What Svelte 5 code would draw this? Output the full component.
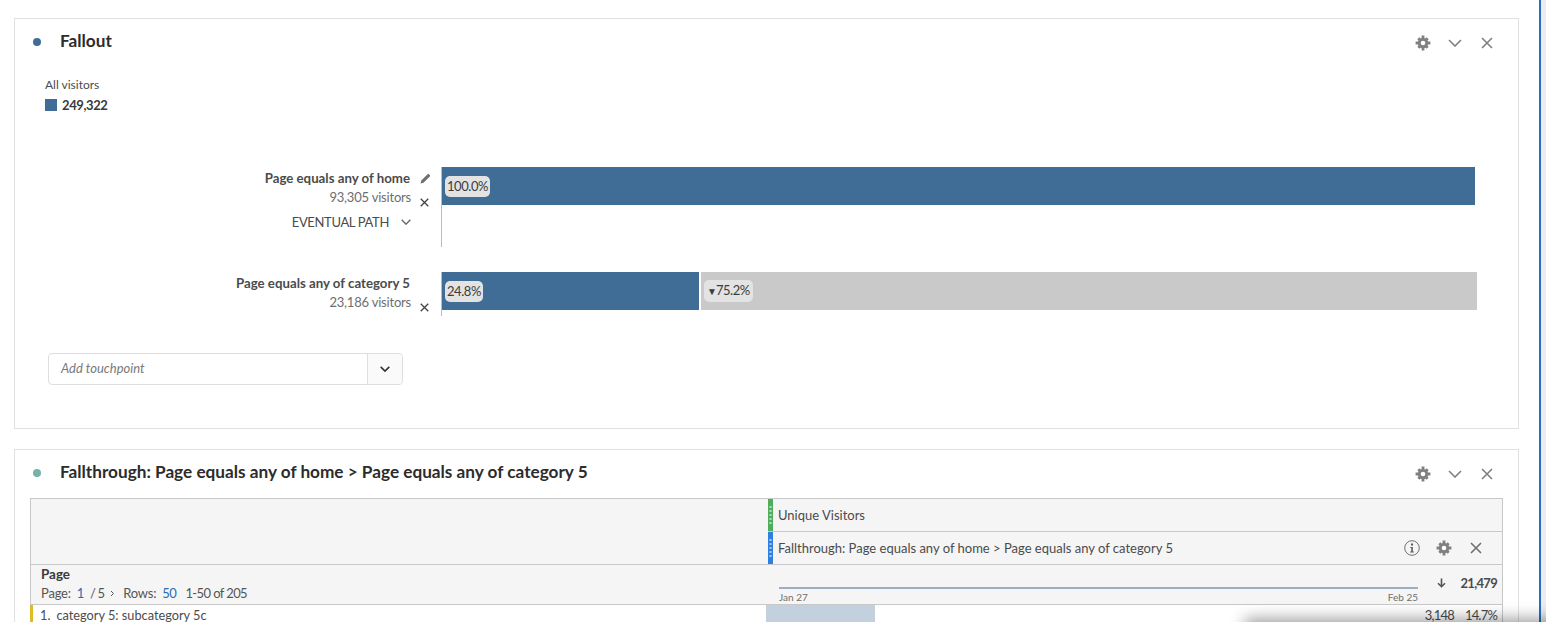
<script>
  const steps = [
    { title: 'Page equals any of home', sub: '93,305 visitors', pct: '100.0%', path: true },
    { title: 'Page equals any of category 5', sub: '23,186 visitors', pct: '24.8%', drop: '75.2%' }
  ];
</script>

{#snippet gear(s)}
  <svg class="ic" width={s} height={s} viewBox="0 0 16 16" aria-hidden="true">
    <circle cx="8" cy="8" r="5.2" fill="#808080" />
    <path d="M6.6 0.6h2.8v3h-2.8zM6.6 12.4h2.8v3h-2.8zM0.6 6.6h3v2.8h-3zM12.4 6.6h3v2.8h-3z" fill="#808080" />
    <path d="M2.3 4.3l2-2 2 2-2 2zM9.7 4.3l2-2 2 2-2 2zM2.3 11.7l2-2 2 2-2 2zM9.7 11.7l2-2 2 2-2 2z" fill="#808080" />
    <circle cx="8" cy="8" r="2.3" fill="#fff" />
  </svg>
{/snippet}
{#snippet cross(s, c = '#808080', w = 1.6)}
  <svg class="ic" width={s} height={s} viewBox="0 0 12 12" aria-hidden="true">
    <path d="M1 1l10 10M11 1L1 11" stroke={c} stroke-width={w} fill="none" />
  </svg>
{/snippet}
{#snippet chev(w, h, c = '#808080', sw = 1.6)}
  <svg class="ic" width={w} height={h} viewBox="0 0 14 8" aria-hidden="true">
    <path d="M1 1l6 6 6-6" stroke={c} stroke-width={sw} fill="none" />
  </svg>
{/snippet}
{#snippet tools()}
  <div class="tools">
    {@render gear(16)}
    <span class="tchev">{@render chev(14, 8)}</span>
    {@render cross(12)}
  </div>
{/snippet}

<div class="page">
  <main class="main">
    <section class="panel fallout">
      <header class="phead">
        <span class="dot blue"></span>
        <h2>Fallout</h2>
        {@render tools()}
      </header>
      <div class="legend">
        <div class="lname">All visitors</div>
        <div class="lval"><span class="swatch"></span><b>249,322</b></div>
      </div>
      <div class="steps">
        {#each steps as s, i}
          <div class="step" class:first={i === 0}>
            <div class="info">
              <div class="line title">
                <span>{s.title}</span>
                <span class="slot">
                  {#if s.path}
                    <svg class="ic" width="11" height="11" viewBox="0 0 11 11" aria-hidden="true">
                      <path d="M0.5 10.5l0.8-3L7.6 1.2a1 1 0 0 1 1.4 0l0.8 0.8a1 1 0 0 1 0 1.4L3.5 9.7z" fill="#707070" />
                    </svg>
                  {/if}
                </span>
              </div>
              <div class="line sub">
                <span>{s.sub}</span>
                <span class="slot low">{@render cross(9, '#444', 1.8)}</span>
              </div>
              {#if s.path}
                <div class="path">EVENTUAL PATH {@render chev(10, 6, '#666', 2)}</div>
              {/if}
            </div>
            <div class="track">
              <div class="bars">
                <div class="bar" class:partial={!!s.drop}><span class="pill">{s.pct}</span></div>
                {#if s.drop}
                  <div class="bar gray"><span class="pill"><i class="tri">▼</i>{s.drop}</span></div>
                {/if}
              </div>
            </div>
          </div>
        {/each}
      </div>
      <div class="combo">
        <span class="ph">Add touchpoint</span>
        <span class="cbtn">{@render chev(10, 6, '#333', 2.2)}</span>
      </div>
    </section>

    <section class="panel through">
      <header class="phead">
        <span class="dot teal"></span>
        <h2>Fallthrough: Page equals any of home &gt; Page equals any of category 5</h2>
        {@render tools()}
      </header>
      <div class="table">
        <div class="thead">
          <div class="tleft">
            <div class="tdim">
              <div class="dname">Page</div>
              <div class="pager">
                <span>Page:</span><a>1</a><span class="frac">/ 5</span>
                <svg class="ic" width="5" height="7" viewBox="0 0 5 7" aria-hidden="true"><path d="M1 1l2.5 2.5L1 6" stroke="#555" stroke-width="1" fill="none" /></svg>
                <span class="rows">Rows:</span><a>50</a><span class="range">1-50 of 205</span>
              </div>
            </div>
          </div>
          <div class="tright">
            <div class="hrow">
              <span class="grip green"></span>
              <span>Unique Visitors</span>
            </div>
            <div class="hrow">
              <span class="grip bluegrip"></span>
              <span>Fallthrough: Page equals any of home &gt; Page equals any of category 5</span>
              <div class="rowtools">
                <svg class="ic" width="16" height="16" viewBox="0 0 16 16" aria-hidden="true">
                  <circle cx="8" cy="8" r="7.3" fill="none" stroke="#707070" stroke-width="1" />
                  <path d="M7 3.6h2v2H7zM6.4 7h2.4v4.4h1v1H6.2v-1h1.1V8H6.4z" fill="#555" />
                </svg>
                {@render gear(16)}
                {@render cross(12, '#707070')}
              </div>
            </div>
            <div class="hsum">
              <div class="spark">
                <div class="sline"></div>
                <div class="sdates"><span>Jan 27</span><span>Feb 25</span></div>
              </div>
              <div class="total">
                <svg class="ic" width="9" height="10" viewBox="0 0 9 10" aria-hidden="true"><path d="M4.5 0.5v8M1 5.2l3.5 3.5L8 5.2" stroke="#555" stroke-width="1.6" fill="none" /></svg>
                <b>21,479</b>
              </div>
            </div>
          </div>
        </div>
        <div class="trow">
          <div class="cname"><span>1.</span><span>category 5: subcategory 5c</span></div>
          <div class="cval">
            <div class="vbar"></div>
            <div class="nums"><span>3,148</span><span>14.7%</span></div>
          </div>
        </div>
      </div>
    </section>
  </main>
  <aside class="rail"></aside>
  <div class="shadow"></div>
</div>

<style>
  :global(body) { margin: 0; background: #fff; }
  .page {
    position: relative;
    display: flex;
    width: 1546px;
    height: 622px;
    overflow: hidden;
    font-family: Lato, "Noto Sans", sans-serif;
    color: #4b4b4b;
    font-size: 13px;
  }
  .main {
    width: 1539px;
    flex: none;
    box-sizing: border-box;
    padding: 18px 20px 0 14px;
    display: flex;
    flex-direction: column;
    gap: 20px;
  }
  .rail {
    flex: 1;
    background: #ececec;
    border-left: 2px solid #2470c2;
  }
  .ic { display: block; flex: none; }
  .panel {
    box-sizing: border-box;
    width: 1505px;
    flex: none;
    border: 1px solid #e1e1e1;
    background: #fff;
  }
  .fallout { height: 411px; }
  .through { height: 300px; padding: 0 15px; }
  .phead {
    display: flex;
    align-items: center;
    height: 48px;
    padding-left: 18px;
  }
  .through .phead { padding-left: 3px; }
  .dot {
    width: 8px;
    height: 8px;
    border-radius: 50%;
    margin: 0 19px 2px 0;
  }
  .dot.blue { background: #3f6d96; }
  .dot.teal { background: #75b2a8; }
  h2 {
    margin: 0 0 6px;
    font-size: 17.2px;
    font-weight: 700;
    color: #2c2c2c;
  }
  .tools {
    margin-left: auto;
    display: flex;
    align-items: center;
    gap: 17px;
    padding-right: 25px;
  }
  .tchev { margin-right: 2px; }
  .through .tools { padding-right: 10px; }
  .legend { padding: 10px 0 0 30px; }
  .lname { font-size: 12px; line-height: 16px; color: #4b4b4b; }
  .lval { display: flex; align-items: center; gap: 5px; margin-top: 4px; line-height: 16px; height: 16px; }
  .lval b { color: #3a3a3a; font-size: 13px; letter-spacing: -0.4px; }
  .swatch { width: 12px; height: 12px; background: #3f6d96; }
  .steps { padding-top: 54px; }
  .step { display: flex; }
  .step.first { height: 105px; }
  .info { width: 426px; flex: none; box-sizing: border-box; }
  .line { display: flex; justify-content: flex-end; align-items: center; }
  .title { height: 22px; font-weight: 700; font-size: 13.25px; color: #4b4b4b; }
  .sub { height: 16px; font-size: 13px; letter-spacing: -0.2px; color: #6e6e6e; margin-bottom: 1px; }
  .slot {
    box-sizing: border-box;
    width: 21px;
    margin-right: 10px;
    padding-left: 10px;
    display: flex;
  }
  .slot.low { width: 20px; padding-left: 9px; padding-top: 11px; }
  .path {
    display: flex;
    align-items: center;
    justify-content: flex-end;
    gap: 12px;
    font-size: 13px;
    letter-spacing: -0.35px;
    height: 22px;
    margin-top: 6px;
    padding-right: 30px;
    color: #4b4b4b;
  }
  .track {
    flex: 1;
    border-left: 1px solid #bdbdbd;
    padding-bottom: 6px;
  }
  .first .track { padding-bottom: 0; height: 80px; }
  .bars { display: flex; gap: 2px; width: 1035px; }
  .first .bars { width: 1033px; }
  .bar {
    flex: 1;
    height: 38px;
    background: #3f6d96;
    display: flex;
    align-items: center;
    padding-left: 3px;
    box-sizing: border-box;
  }
  .bar.partial { flex: 0 0 257px; }
  .bar.gray { background: #c9c9c9; }
  .pill {
    background: #e3e3e3;
    border-radius: 5px;
    padding: 0 2px;
    line-height: 21px;
    font-size: 13px;
    letter-spacing: -0.45px;
    color: #3c3c3c;
  }
  .bar.gray .pill { padding: 0 3px; }
  .tri {
    font-style: normal;
    font-size: 10px;
    letter-spacing: 0;
    margin-right: -1px;
  }
  .combo {
    margin: 37px 0 0 33px;
    width: 355px;
    height: 32px;
    box-sizing: border-box;
    border: 1px solid #dedede;
    border-radius: 4px;
    display: flex;
    align-items: center;
  }
  .ph { flex: 1; padding: 0 0 2px 12px; font-style: italic; color: #7a7a7a; font-size: 13px; }
  .cbtn {
    box-sizing: border-box;
    width: 35px;
    height: 100%;
    background: #fafafa;
    border-left: 1px solid #dedede;
    border-radius: 0 4px 4px 0;
    display: flex;
    align-items: center;
    justify-content: center;
  }
  .table {
    border: 1px solid #c8c8c8;
    border-bottom: 0;
    width: 1473px;
    box-sizing: border-box;
  }
  .thead {
    display: flex;
    background: #f5f5f5;
    border-bottom: 1px solid #c8c8c8;
    height: 106px;
    box-sizing: border-box;
  }
  .tleft {
    width: 737px;
    flex: none;
    display: flex;
    flex-direction: column;
    justify-content: flex-end;
  }
  .tdim { border-top: 1px solid #c8c8c8; height: 40px; box-sizing: border-box; padding: 0 0 0 10px; }
  .dname { font-weight: 700; color: #3a3a3a; font-size: 13.4px; line-height: 18px; }
  .pager { display: flex; align-items: center; gap: 6px; line-height: 21px; font-size: 13px; letter-spacing: -0.2px; color: #555; }
  .pager a { color: #2a6cb5; letter-spacing: -0.5px; }
  .frac { letter-spacing: -0.8px; }
  .rows { margin-left: 2px; }
  .range { margin-left: 3px; letter-spacing: -0.6px; }
  .tright { flex: 1; display: flex; flex-direction: column; }
  .hrow {
    height: 33px;
    flex: none;
    box-sizing: border-box;
    border-bottom: 1px solid #c8c8c8;
    display: flex;
    align-items: center;
    gap: 5px;
    font-size: 13px;
    color: #4b4b4b;
  }
  .grip {
    width: 5px;
    align-self: stretch;
    display: flex;
    align-items: center;
  }
  .grip::after {
    content: '';
    width: 5px;
    height: 20px;
    background-image: radial-gradient(circle, rgba(255,255,255,.55) 1px, transparent 1.3px);
    background-size: 5px 4px;
  }
  .grip.green { background-color: #4fae5c; }
  .grip.bluegrip { background-color: #2f7fe0; }
  .rowtools {
    margin-left: auto;
    display: flex;
    align-items: center;
    gap: 16px;
    padding-right: 20px;
  }
  .rowtools .ic:last-child { margin-left: 2px; }
  .hsum { flex: 1; display: flex; }
  .spark { width: 639px; flex: none; padding: 22px 0 0 11px; box-sizing: content-box; }
  .sline { height: 2px; background: #9dadc2; }
  .sdates {
    display: flex;
    justify-content: space-between;
    font-size: 10px;
    line-height: 14px;
    color: #6e6e6e;
    margin-top: 1px;
  }
  .total {
    flex: 1;
    display: flex;
    align-items: center;
    justify-content: flex-end;
    gap: 14px;
    padding: 0 5px 4px 0;
  }
  .total b { color: #4b4b4b; font-size: 13px; letter-spacing: -0.7px; }
  .trow { display: flex; height: 40px; }
  .cname {
    width: 736px;
    flex: none;
    box-sizing: border-box;
    border-left: 3px solid #dcbe22;
    margin-left: -1px;
    padding-left: 7px;
    display: flex;
    gap: 6px;
    font-size: 12.75px;
    line-height: 20px;
    color: #4b4b4b;
  }
  .cval { flex: 1; position: relative; }
  .vbar { width: 109px; height: 100%; background: #c3d0dd; }
  .nums {
    position: absolute;
    top: 0;
    right: 5px;
    display: flex;
    gap: 11px;
    line-height: 20px;
    font-size: 13px;
    letter-spacing: -0.8px;
  }
  .shadow {
    position: absolute;
    left: 1245px;
    right: -20px;
    bottom: -30px;
    height: 30px;
    box-shadow: 0 -3px 16px rgba(0,0,0,.4);
    background: #fff;
  }
</style>
